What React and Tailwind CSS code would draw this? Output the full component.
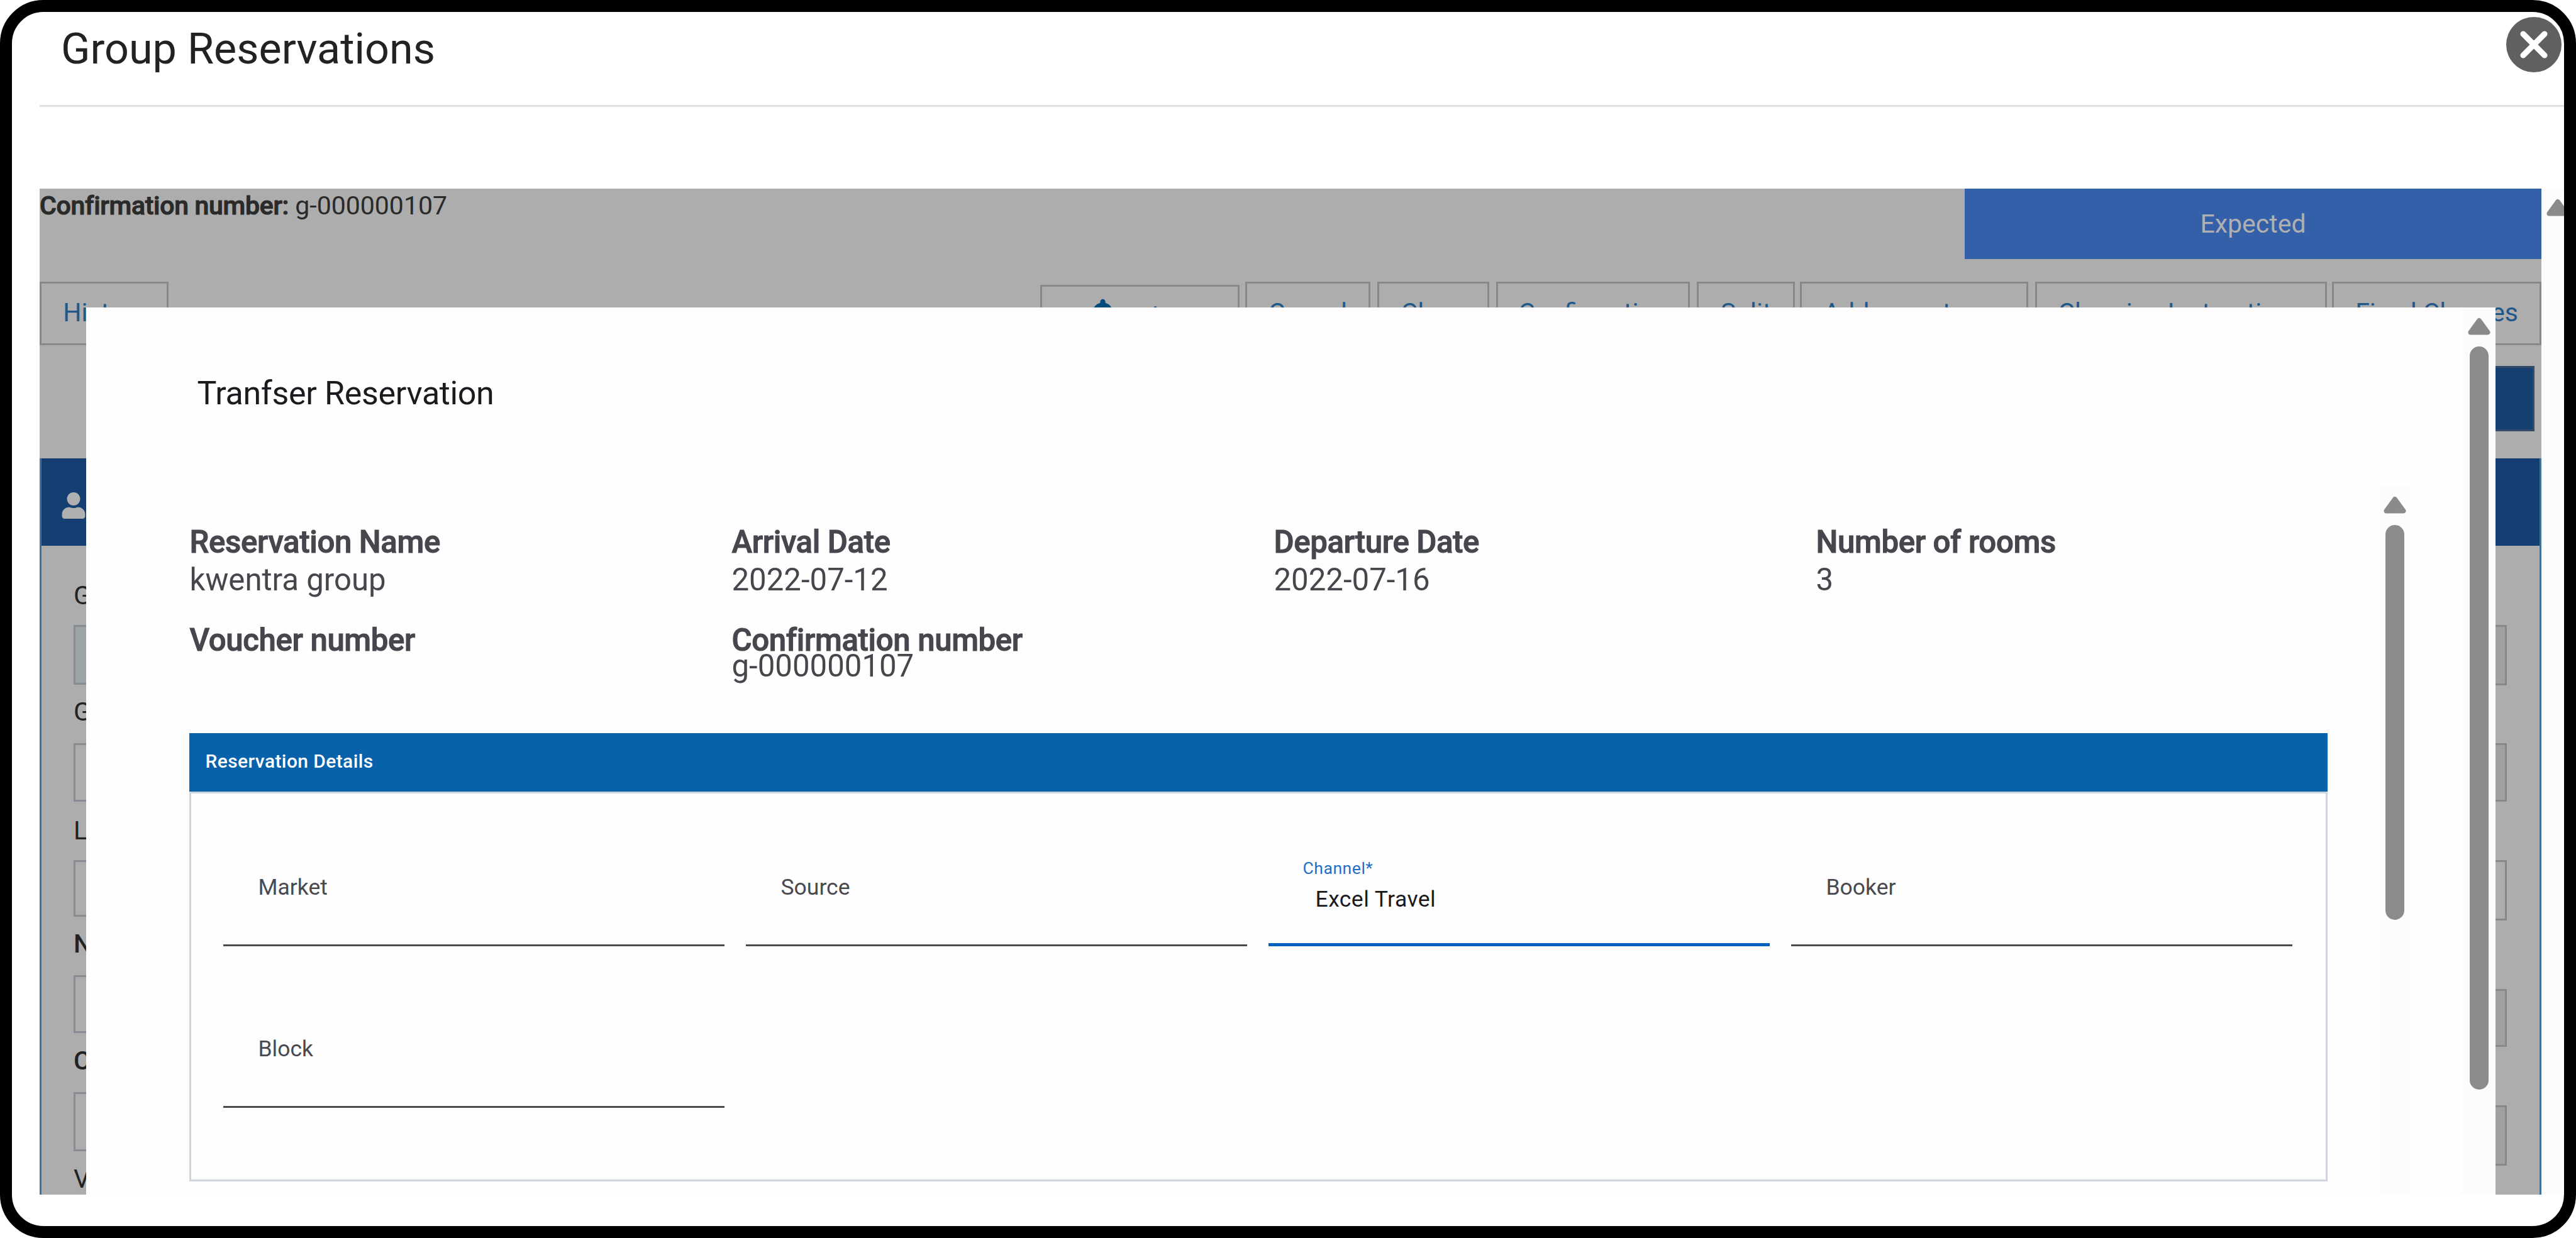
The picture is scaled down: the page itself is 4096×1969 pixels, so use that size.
import React from 'react';
import { FaUser } from 'react-icons/fa';
import { MdNotifications } from 'react-icons/md';

const toolbar = [
  { label: 'Cancel', size: 'w-[199px] ml-[9px]' },
  { label: 'Close', size: 'w-[178px] ml-[11px]' },
  { label: 'Confirmation', size: 'w-[308px] ml-[11px]' },
  { label: 'Split', size: 'w-[156px] ml-[11px]' },
  { label: 'Add room types', size: 'w-[363px] ml-[8px]' },
  { label: 'Charging Instructions', size: 'w-[464px] ml-[11px]' },
  { label: 'Fixed Charges', size: 'w-[333px] ml-[8px]' },
];

const guestFields = [
  { label: 'Group', row: 'mt-[55px]', input: 'mt-[23px] h-[95px] bg-[#9ea3a6]' },
  { label: 'Guest', row: 'mt-[19px]', input: 'mt-[26px] h-[93px]' },
  { label: 'Last Name', row: 'mt-[22px]', input: 'mt-[23px] h-[90px]' },
  { label: 'Nationality', row: 'mt-[19px] font-medium', input: 'mt-[26px] h-[92px]' },
  { label: 'Country', row: 'mt-[20px] font-medium', input: 'mt-[26px] h-[94px]' },
  { label: 'VIP', row: 'mt-[20px]', input: 'mt-[26px] h-[94px]' },
];

const stayFields = [
  'mt-[126px] h-[96px] bg-[#a0a0a0]',
  'mt-[92px] h-[93px] bg-[#a0a0a0]',
  'mt-[93px] h-[96px]',
  'mt-[109px] h-[92px] bg-[#a0a0a0]',
  'mt-[93px] h-[96px] bg-[#a0a0a0]',
];

const summary = [
  { label: 'Reservation Name', value: 'kwentra group' },
  { label: 'Arrival Date', value: '2022-07-12' },
  { label: 'Departure Date', value: '2022-07-16' },
  { label: 'Number of rooms', value: '3' },
];

const ArrowUp = () => (
  <svg viewBox="0 0 36 28" className="w-[36px] h-[28px] shrink-0">
    <path d="M18 5 L31.5 23.5 H4.5 Z" fill="#8b8b8b" stroke="#8b8b8b" strokeWidth="8" strokeLinejoin="round" />
  </svg>
);

const Scrollbar = ({ thumb }) => (
  <div className="w-[52px] h-full shrink-0 bg-[#fcfcfc] flex flex-col items-center pt-4">
    <ArrowUp />
    {thumb && <div className={`w-[30px] mt-[18px] shrink-0 rounded-full bg-[#8b8b8b] ${thumb}`} />}
  </div>
);

const CloseButton = () => (
  <button className="absolute left-[3966px] top-[8px] w-[88px] h-[88px] z-20">
    <svg viewBox="0 0 96 96" className="w-full h-full">
      <circle cx="48" cy="48" r="48" fill="#606060" />
      <path d="M29.5 29.5 L66.5 66.5 M66.5 29.5 L29.5 66.5" stroke="#fff" strokeWidth="10" strokeLinecap="round" />
    </svg>
  </button>
);

const Strong = ({ children }) => (
  <p className="font-medium tracking-[-0.35px] [-webkit-text-stroke:1px_#45474d]">{children}</p>
);

const Field = ({ label }) => (
  <div className="h-[140px] border-b-[3px] border-[#49494f] pt-[22px] pl-[56px] text-[35.5px] leading-[48px] text-[#49494f]">
    {label}
  </div>
);

const TransferDialog = () => (
  <div className="absolute left-[73.5px] top-[189px] bottom-0 w-[3831px] bg-[#fefefe] flex">
    <div className="flex-1 flex flex-col">
      <h3 className="h-[284px] shrink-0 pt-[105px] pl-[177px] text-[52px] tracking-[-0.35px] leading-[64px] text-[#1b1b1f]">Tranfser Reservation</h3>
      <div className="flex flex-1 w-[3697px]">
        <div className="flex-1 pl-[164px] pt-[59px]">
          <div className="grid grid-cols-[repeat(4,862px)] w-[3400px] pl-px text-[49.15px] leading-[60px] text-[#45474d]">
            {summary.map((item) => (
              <div key={item.label}>
                <Strong>{item.label}</Strong>
                <p>{item.value}</p>
              </div>
            ))}
          </div>
          <div className="grid grid-cols-[repeat(4,862px)] w-[3400px] pl-px mt-[46px] h-[81px] text-[49.15px] leading-[41px] text-[#45474d]">
            <Strong>Voucher number</Strong>
            <div>
              <Strong>Confirmation number</Strong>
              <p>g-000000107</p>
            </div>
          </div>

          <div className="mt-[87px] w-[3400px]">
            <div className="h-[93px] bg-[#0762ab] flex items-center pl-[26px] pb-1 text-[30px] tracking-[0.4px] font-medium text-white">
              Reservation Details
            </div>
            <div className="h-[620px] border-[3px] border-[#d0d4dc] pt-[103px] pl-[51px]">
              <div className="grid grid-cols-[repeat(4,797px)] gap-x-[34px] gap-y-[117px]">
                <Field label="Market" />
                <Field label="Source" />
                <div className="h-[140px] border-b-[5.5px] border-[#0060c0]">
                  <p className="pl-[55px] text-[26.6px] tracking-[0.5px] leading-[32px] text-[#1e70c8]">Channel*</p>
                  <p className="mt-[9px] pl-[75px] text-[35.5px] tracking-[0.45px] leading-[48px] text-[#1b1b1f]">Excel Travel</p>
                </div>
                <Field label="Booker" />
                <Field label="Block" />
              </div>
            </div>
          </div>
        </div>
        <Scrollbar thumb="h-[628px]" />
      </div>
    </div>
    <Scrollbar thumb="h-[1182px]" />
  </div>
);

const App = () => {
  return (
    <div className="relative w-[4096px] h-[1969px] overflow-hidden border-[19px] border-black rounded-[69px] bg-white font-['Roboto',sans-serif]">
      <div className="ml-[44px] h-[151px] border-b-[3px] border-[#e0e0e0] pt-[25px] pl-[34px]">
        <h2 className="text-[68.3px] leading-none text-[#222222]">Group Reservations</h2>
      </div>
      <CloseButton />

      <div className="ml-[44px] mt-[130px] flex h-[1600px]">
        <div className="relative w-[3978px] shrink-0 h-full overflow-hidden bg-[#adadad] flex flex-col text-[41px] leading-[48px]">
          <div className="flex justify-between h-[112px] shrink-0">
            <p className="pt-[3px] text-[#2a2a2a]">
              <span className="font-medium tracking-[-0.3px] [-webkit-text-stroke:1px_#2a2a2a]">Confirmation number:</span> g-000000107
            </p>
            <div className="w-[917px] flex items-center justify-center bg-[#345fa9] text-[#b0b0b0]">Expected</div>
          </div>

          <div className="mt-[36px] h-[101px] shrink-0 flex text-[#22578a]">
            <button className="w-[205px] h-full pb-1 border-[3px] border-[#888888] text-center">History</button>
            <button className="ml-auto mt-[5px] w-[317px] h-[96px] border-[3px] border-[#888888] flex items-start pl-[64px] pt-[13px]">
              <MdNotifications className="w-[65px] h-[65px] text-[#004d7d]" />
              <span className="mt-[11px]">Select</span>
            </button>
            {toolbar.map((btn) => (
              <button key={btn.label} className={`h-full shrink-0 pb-1 border-[3px] border-[#888888] whitespace-nowrap ${btn.size}`}>
                {btn.label}
              </button>
            ))}
          </div>

          <div className="mt-[33px] mr-[11px] w-[320px] h-[104px] shrink-0 self-end bg-[#163f72] border-[3px] border-[#334b66]" />

          <div className="mt-[43px] flex-1 border-x-[3px] border-[#407299]">
            <div className="h-[139px] bg-[#153f73] pl-8 pt-[54px]">
              <FaUser className="w-[38px] h-[42px] text-[#b0b0b0]" />
            </div>
            <div className="flex justify-between pl-[51px] pr-[52px] text-[#222222]">
              <div className="w-[600px]">
                {guestFields.map((field) => (
                  <div key={field.label} className={field.row}>
                    <p>{field.label}</p>
                    <div className={`border-[3px] border-[#888b94] ${field.input}`} />
                  </div>
                ))}
              </div>
              <div className="w-[600px]">
                {stayFields.map((field) => (
                  <div key={field} className={`border-[3px] border-[#888888] ${field}`} />
                ))}
              </div>
            </div>
          </div>

          <TransferDialog />
        </div>
        <Scrollbar />
      </div>
    </div>
  );
};

export default App;
